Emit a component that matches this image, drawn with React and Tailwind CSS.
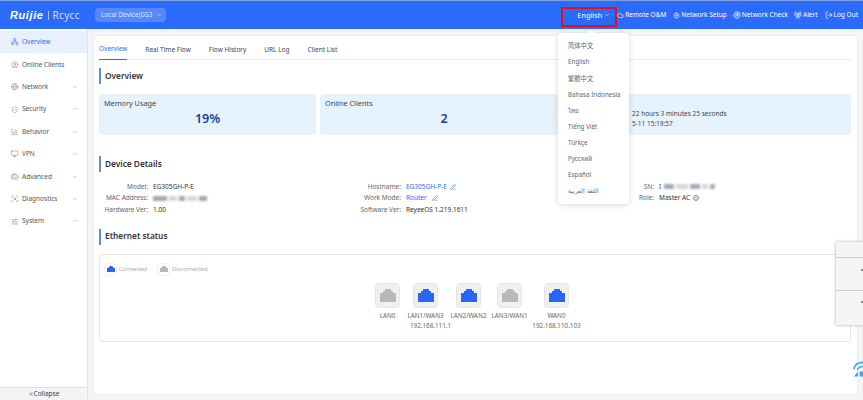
import React from 'react'
import {
  Network, CircleUser, Globe, ShieldCheck, ChartColumn, Monitor, BriefcaseBusiness, ScanSearch,
  SlidersHorizontal, ChevronDown, ChevronsLeft, Cloud, Settings, Radar, RadioTower, LogOut, PenLine, Info,
} from 'lucide-react'

const menu = [
  { name: 'Overview', icon: Network, active: true },
  { name: 'Online Clients', icon: CircleUser },
  { name: 'Network', icon: Globe, arrow: true },
  { name: 'Security', icon: ShieldCheck, arrow: true },
  { name: 'Behavior', icon: ChartColumn, arrow: true },
  { name: 'VPN', icon: Monitor, arrow: true },
  { name: 'Advanced', icon: BriefcaseBusiness, arrow: true },
  { name: 'Diagnostics', icon: ScanSearch, arrow: true },
  { name: 'System', icon: SlidersHorizontal, arrow: true },
]

const languages = ['简体中文', 'English', '繁體中文', 'Bahasa Indonesia', 'ไทย', 'Tiếng Việt', 'Türkçe', 'Русский', 'Español', 'اللغة العربية']

const ports = [
  { name: 'LAN0', width: 'w-[38px]', on: false },
  { name: 'LAN1/WAN3', width: 'w-[38px]', on: true, ip: '192.168.111.1', ipClass: 'pl-[10px]' },
  { name: 'LAN2/WAN2', width: 'w-[48px]', on: true },
  { name: 'LAN3/WAN1', width: 'w-[34px]', on: false },
  { name: 'WAN0', width: 'w-[60px]', on: true, ip: '192.168.110.103' },
]

function PortGlyph({ on, className }) {
  return (
    <svg viewBox="0 0 16 13" className={className}>
      <path d="M0 13V4h3V2h2V0h6v2h2v2h3v9z" fill={on ? '#2a66f6' : '#b8b8b8'} />
    </svg>
  )
}

function Heading({ children }) {
  return (
    <div className="flex items-center h-4 border-l-2 border-[#5b8cf5] pl-[4px] text-[8.3px] font-semibold text-[#333]">
      {children}
    </div>
  )
}

// masked values in the screenshot (MAC, serial number)
function Blurred({ widths }) {
  return (
    <span className="inline-flex items-center gap-[2px] blur-[0.8px]">
      {widths.map((w, i) => (
        <span key={i} className={`h-[5px] ${w} ${i % 2 ? 'bg-[#d3d6dc]' : 'bg-[#a4a9b4]'}`} />
      ))}
    </span>
  )
}

function Row({ label, children }) {
  return (
    <div className="flex items-center h-[11.5px]">
      <span className="w-[49px] flex justify-end whitespace-nowrap text-[#666]">{label}:</span>
      <span className="ml-[5px] flex items-center gap-[3px] text-[#333] whitespace-nowrap">{children}</span>
    </div>
  )
}

export default function App() {
  return (
    <div className="relative h-[400px] w-[863px] overflow-hidden bg-[#f4f5f7] text-[6.5px] font-['Noto_Sans','Noto_Sans_CJK_SC',sans-serif]">
      {/* Top bar */}
      <header className="flex items-center h-[29px] bg-[#2a6bfb] border-t border-[#7f9fe0] text-white">
        <div className="flex items-center w-[95px] pl-[10px]">
          <span className="text-[11px] font-bold italic tracking-[0.6px] font-['Liberation_Sans',sans-serif]">Ruijie</span>
          <span className="mx-[4px] h-[9px] w-px bg-white/60" />
          <span className="text-[10px] text-[#cfe0ff] tracking-[0.3px]">Rcycc</span>
        </div>
        <div className="flex items-center h-[14px] w-[71px] pl-[6px] rounded-sm bg-white/20 text-[#dfe8ff]">
          Local Device(EG3
          <ChevronDown className="w-[6px] h-[6px] ml-[3px]" />
        </div>
        <div className="ml-auto flex items-center pr-[5px]">
          <span className="flex items-center gap-[2px] text-[7.3px] mr-[7px]">
            English <ChevronDown className="w-[6px] h-[6px]" />
          </span>
          <span className="flex items-center gap-[1px] mr-[7px]"><Cloud className="w-[7px] h-[7px]" />Remote O&amp;M</span>
          <span className="flex items-center gap-[1px] mr-[6px]"><Settings className="w-[7px] h-[7px]" />Network Setup</span>
          <span className="flex items-center gap-[1px] mr-[6px]"><Radar className="w-[8px] h-[8px]" />Network Check</span>
          <span className="flex items-center gap-[1px] mr-[7px]"><RadioTower className="w-[8px] h-[8px]" />Alert</span>
          <span className="flex items-center gap-[1px]"><LogOut className="w-[8px] h-[8px]" />Log Out</span>
        </div>
      </header>

      <div className="flex h-[371px]">
        {/* Sidebar */}
        <aside className="flex flex-col w-[88px] bg-white border-r border-[#e4e4e4]">
          <nav className="flex-1 pt-[2px]">
            {menu.map((item) => {
              const Icon = item.icon
              return (
                <div
                  key={item.name}
                  className={`flex items-center h-[22.4px] pl-[11px] pr-[9px] ${item.active ? 'bg-[#e8effd] text-[#2a6bfb]' : 'text-[#555]'}`}
                >
                  <Icon className={`w-[7.5px] h-[7.5px] mr-[3.5px] ${item.active ? '' : 'text-[#777]'}`} strokeWidth={1.5} />
                  {item.name}
                  {item.arrow && <ChevronDown className="ml-auto w-[6px] h-[6px] text-[#999]" />}
                </div>
              )
            })}
          </nav>
          <div className="flex items-center justify-center h-[13px] bg-[#f4f4f4] border-t border-[#ddd] text-[#444]">
            <ChevronsLeft className="w-[6px] h-[6px]" />Collapse
          </div>
        </aside>

        {/* Content */}
        <main className="flex-1 pl-[5px] pr-[5px] pt-[6px] pb-[5px]">
          <div className="h-full bg-white rounded-sm border border-[#ededed] pl-[5px] pr-[6px]">
            <div className="flex gap-[18px] h-[24px] pt-[3px] border-b border-[#e9ecf2] text-[#444]">
              <span className="flex items-center h-[21px] border-b border-[#2a6bfb] text-[#2a6bfb] whitespace-nowrap">Overview</span>
              <span className="flex items-center h-[21px] whitespace-nowrap">Real Time Flow</span>
              <span className="flex items-center h-[21px] whitespace-nowrap">Flow History</span>
              <span className="flex items-center h-[21px] whitespace-nowrap">URL Log</span>
              <span className="flex items-center h-[21px] whitespace-nowrap">Client List</span>
            </div>

            <div className="mt-[8px]"><Heading>Overview</Heading></div>

            <div className="flex gap-[4px] mt-[10px] h-[41px]">
              <div className="w-[217px] bg-[#e6f3fd] rounded-sm px-[5px] pt-[4px] text-[7.3px] text-[#444]">
                Memory Usage
                <div className="text-center mt-[3px] text-[12.5px] font-semibold leading-[14px] text-[#14409e]">19%</div>
              </div>
              <div className="w-[248px] bg-[#e6f3fd] rounded-sm px-[5px] pt-[4px] text-[7.3px] text-[#444]">
                Online Clients
                <div className="text-center mt-[3px] text-[12.5px] font-semibold leading-[14px] text-[#14409e]">2</div>
              </div>
              <div className="flex-1 bg-[#e6f3fd] rounded-sm pl-[60px] pt-[15px] text-[#444] leading-[10px]">
                <div>22 hours 3 minutes 25 seconds</div>
                <div>5-11 15:19:57</div>
              </div>
            </div>

            <div className="mt-[21px]"><Heading>Device Details</Heading></div>

            <div className="grid grid-cols-[253px_253px_1fr] mt-[9px]">
              <div>
                <Row label="Model">EG305GH-P-E</Row>
                <Row label="MAC Address"><Blurred widths={['w-[14px]', 'w-[8px]', 'w-[6px]', 'w-[10px]', 'w-[8px]']} /></Row>
                <Row label="Hardware Ver">1.00</Row>
              </div>
              <div>
                <Row label="Hostname">
                  <span className="text-[#2a6bfb]">EG305GH-P-E</span>
                  <PenLine className="w-[6px] h-[6px] text-[#2a6bfb]" />
                </Row>
                <Row label="Work Mode">
                  <span className="text-[#2a6bfb]">Router</span>
                  <PenLine className="ml-[2px] w-[6px] h-[6px] text-[#2a6bfb]" />
                </Row>
                <Row label="Software Ver">ReyeeOS 1.219.1611</Row>
              </div>
              <div>
                <Row label="SN">I <Blurred widths={['w-[10px]', 'w-[12px]', 'w-[10px]', 'w-[6px]', 'w-[5px]']} /></Row>
                <Row label="Role">Master AC <Info className="w-[6px] h-[6px] text-[#666]" strokeWidth={3} /></Row>
              </div>
            </div>

            <div className="mt-[13px]"><Heading>Ethernet status</Heading></div>

            <div className="mt-[9px] h-[88px] rounded-sm border border-[#e6e6e6] pl-[4px] pt-[8px]">
              <div className="flex items-center text-[5.6px] text-[#aaa]">
                <span className="flex items-center justify-center w-[13px] h-[13px] border border-[#f0f0f0] rounded-sm">
                  <PortGlyph on className="w-[8px] h-[6.5px]" />
                </span>
                <span className="ml-[2px] w-[38px]">Connected</span>
                <span className="flex items-center justify-center w-[13px] h-[13px] border border-[#f0f0f0] rounded-sm">
                  <PortGlyph className="w-[8px] h-[6.5px]" />
                </span>
                <span className="ml-[2px]">Disconnected</span>
              </div>
              <div className="flex justify-center mt-[7px] ml-[1px] text-[6.3px] text-[#666]">
                {ports.map((p) => (
                  <div key={p.name} className={`flex flex-col items-center ${p.width}`}>
                    <span className="flex items-center justify-center w-[25px] h-[25px] bg-[#f0f0f0] border border-[#e6e6e6] rounded-sm shrink-0">
                      <PortGlyph on={p.on} className="w-[16px] h-[13px]" />
                    </span>
                    <span className="mt-[3px] leading-[10px] whitespace-nowrap">{p.name}</span>
                    {p.ip && <span className={`leading-[10px] whitespace-nowrap ${p.ipClass || ''}`}>{p.ip}</span>}
                  </div>
                ))}
              </div>
            </div>
          </div>
        </main>
      </div>

      {/* Language selector highlight */}
      <div className="absolute left-[561px] top-[7px] w-[56px] h-[20px] border-[2.5px] border-[#e0101c]" />

      {/* Language menu */}
      <div className="absolute left-[558px] top-[33px] w-[71px] h-[171px] pt-[5px] bg-white rounded-sm shadow-[0_1px_6px_rgba(0,0,0,0.15)] text-[6.3px] text-[#666]">
        <span className="absolute left-[31px] -top-[2px] w-[5px] h-[5px] rotate-45 bg-white" />
        {languages.map((lang) => (
          <div key={lang} className="flex items-center h-[16.1px] pl-[10px] whitespace-nowrap">{lang}</div>
        ))}
      </div>

      {/* Floating side panel */}
      <div className="absolute left-[836px] top-[242px] w-[27px] h-[83px] flex flex-col bg-[#f5f5f5] shadow-[0_0_3px_rgba(0,0,0,0.35)]">
        <div className="h-[16px] border-b border-[#ccc]" />
        <div className="h-[33px] border-b border-[#ccc] flex items-start justify-end pt-[11px]">
          <span className="w-[2px] h-[2px] bg-[#888]" />
        </div>
        <div className="flex items-start justify-end pt-[10px]">
          <span className="w-[2px] h-[2px] bg-[#888]" />
        </div>
      </div>

      {/* Floating assistant icon */}
      <svg viewBox="0 0 12 20" className="absolute left-[853px] top-[359px] w-[10px] h-[20px]" fill="none">
        <path d="M1 10C2 5 6 2 12 2" stroke="#35a8f0" strokeWidth="2.2" />
        <path d="M5 11c1-2 3-4 7-4" stroke="#35a8f0" strokeWidth="2" />
        <path d="M1 19l5-6v6z" fill="#35a8f0" />
        <path d="M8 13h4v6H8z" fill="#35a8f0" />
      </svg>
    </div>
  )
}
